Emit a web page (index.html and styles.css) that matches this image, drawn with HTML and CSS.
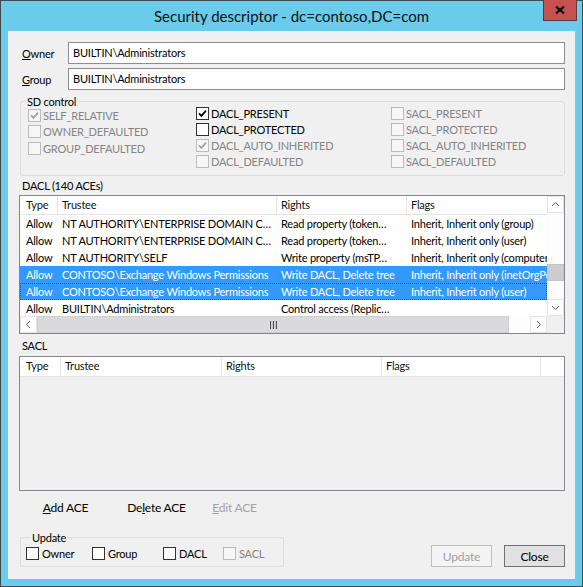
FILE: index.html
```html
<!DOCTYPE html>
<html>
<head>
<meta charset="utf-8">
<title>Security descriptor</title>
<link rel="stylesheet" href="styles.css">
</head>
<body>
<div class="window">
  <div class="titlebar">
    <div class="title">Security descriptor - dc=contoso,DC=com</div>
    <div class="close-btn">
      <svg class="close-x" viewBox="0 0 10 8" width="10" height="8"><path d="M1 0.6 L9 7.4 M9 0.6 L1 7.4"/></svg>
    </div>
  </div>
  <div class="client">
    <div class="field-row first">
      <div class="field-label"><u>O</u>wner</div>
      <div class="textbox">BUILTIN\Administrators</div>
    </div>
    <div class="field-row second">
      <div class="field-label"><u>G</u>roup</div>
      <div class="textbox">BUILTIN\Administrators</div>
    </div>

    <fieldset class="groupbox sd">
      <legend>SD control</legend>
      <div class="sd-grid">
        <div class="sd-col col1">
          <div class="cb disabled"><span class="box"><svg class="tick" viewBox="0 0 11 11"><path d="M2 5.4 L4.4 7.9 L9 2.6"/></svg></span><span>SELF_RELATIVE</span></div>
          <div class="cb disabled"><span class="box"></span><span>OWNER_DEFAULTED</span></div>
          <div class="cb disabled"><span class="box"></span><span>GROUP_DEFAULTED</span></div>
        </div>
        <div class="sd-col">
          <div class="cb"><span class="box"><svg class="tick" viewBox="0 0 11 11"><path d="M2 5.4 L4.4 7.9 L9 2.6"/></svg></span><span>DACL_PRESENT</span></div>
          <div class="cb"><span class="box"></span><span>DACL_PROTECTED</span></div>
          <div class="cb disabled"><span class="box"><svg class="tick" viewBox="0 0 11 11"><path d="M2 5.4 L4.4 7.9 L9 2.6"/></svg></span><span>DACL_AUTO_INHERITED</span></div>
          <div class="cb disabled"><span class="box"></span><span>DACL_DEFAULTED</span></div>
        </div>
        <div class="sd-col">
          <div class="cb disabled"><span class="box"></span><span>SACL_PRESENT</span></div>
          <div class="cb disabled"><span class="box"></span><span>SACL_PROTECTED</span></div>
          <div class="cb disabled"><span class="box"></span><span>SACL_AUTO_INHERITED</span></div>
          <div class="cb disabled"><span class="box"></span><span>SACL_DEFAULTED</span></div>
        </div>
      </div>
    </fieldset>

    <div class="section-label dacl-label">DACL (140 ACEs)</div>
    <div class="listview dacl">
      <div class="lv-top">
        <div class="lv-viewport">
          <div class="lv-header dacl-cols">
            <div class="hc">Type</div>
            <div class="hc">Trustee</div>
            <div class="hc">Rights</div>
            <div class="hc">Flags</div>
          </div>
          <div class="lv-row dacl-cols"><span>Allow</span><span>NT AUTHORITY\ENTERPRISE DOMAIN C…</span><span>Read property (token…</span><span>Inherit, Inherit only (group)</span></div>
          <div class="lv-row dacl-cols"><span>Allow</span><span>NT AUTHORITY\ENTERPRISE DOMAIN C…</span><span>Read property (token…</span><span>Inherit, Inherit only (user)</span></div>
          <div class="lv-row dacl-cols"><span>Allow</span><span>NT AUTHORITY\SELF</span><span>Write property (msTP…</span><span>Inherit, Inherit only (computer)</span></div>
          <div class="lv-row dacl-cols sel"><span>Allow</span><span>CONTOSO\Exchange Windows Permissions</span><span>Write DACL, Delete tree</span><span>Inherit, Inherit only (inetOrgPerson)</span></div>
          <div class="lv-row dacl-cols sel focus"><span>Allow</span><span>CONTOSO\Exchange Windows Permissions</span><span>Write DACL, Delete tree</span><span>Inherit, Inherit only (user)</span></div>
          <div class="lv-row dacl-cols"><span>Allow</span><span>BUILTIN\Administrators</span><span>Control access (Replic…</span><span></span></div>
        </div>
        <div class="vscroll">
          <div class="sb-btn"><svg viewBox="0 0 17 17" width="17" height="17"><path d="M5 10 L8.5 6.5 L12 10"/></svg></div>
          <div class="vtrack"><div class="vthumb"></div></div>
          <div class="sb-btn"><svg viewBox="0 0 17 17" width="17" height="17"><path d="M5 7 L8.5 10.5 L12 7"/></svg></div>
        </div>
      </div>
      <div class="lv-bottom">
        <div class="hscroll">
          <div class="sb-btn"><svg viewBox="0 0 17 17" width="17" height="17"><path d="M10 5 L6.5 8.5 L10 12"/></svg></div>
          <div class="hthumb"><svg class="grip" viewBox="0 0 7 8" width="7" height="8"><path d="M0.5 0 V8 M3.5 0 V8 M6.5 0 V8"/></svg></div>
          <div class="htrack"></div>
          <div class="sb-btn"><svg viewBox="0 0 17 17" width="17" height="17"><path d="M7 5 L10.5 8.5 L7 12"/></svg></div>
        </div>
        <div class="corner"></div>
      </div>
    </div>

    <div class="section-label sacl-label">SACL</div>
    <div class="listview sacl">
      <div class="lv-header sacl-cols">
        <div class="hc">Type</div>
        <div class="hc">Trustee</div>
        <div class="hc">Rights</div>
        <div class="hc">Flags</div>
        <div class="hc last"></div>
      </div>
    </div>

    <div class="ace-buttons">
      <div class="flat-btn add"><u>A</u>dd ACE</div>
      <div class="flat-btn del">De<u>l</u>ete ACE</div>
      <div class="flat-btn edit disabled-text"><u>E</u>dit ACE</div>
    </div>

    <div class="bottom-row">
      <fieldset class="groupbox update">
        <legend>Update</legend>
        <div class="update-row">
          <div class="cb u-owner"><span class="box"></span><span>Owner</span></div>
          <div class="cb u-group"><span class="box"></span><span>Group</span></div>
          <div class="cb u-dacl"><span class="box"></span><span>DACL</span></div>
          <div class="cb disabled u-sacl"><span class="box"></span><span>SACL</span></div>
        </div>
      </fieldset>
      <div class="push-btn disabled-btn">Update</div>
      <div class="push-btn close">Close</div>
    </div>
  </div>
</div>
</body>
</html>
```

FILE: styles.css
```css
* {
  box-sizing: border-box;
}

html, body {
  margin: 0;
  padding: 0;
}

body {
  width: 583px;
  height: 587px;
  overflow: hidden;
  font-family: Lato, "Liberation Sans", sans-serif;
  font-size: 11px;
  letter-spacing: -0.2px;
  color: #000;
  background: #68ccea;
}

.window {
  width: 583px;
  height: 587px;
  border: 1px solid #3d4a50;
  background: #68ccea;
  display: flex;
  flex-direction: column;
}

/* Title bar */
.titlebar {
  height: 30px;
  flex: none;
  display: grid;
  grid-template-columns: 1fr auto 1fr;
  align-items: start;
}

.title {
  grid-column: 2;
  font-size: 15px;
  letter-spacing: 0;
  line-height: 30px;
  color: #111;
  white-space: nowrap;
}

.close-btn {
  grid-column: 3;
  justify-self: end;
  margin-top: -1px;
  margin-right: 5px;
  width: 34px;
  height: 21px;
  background: #c75050;
  border: 1px solid #5e3a3a;
  border-top: none;
  display: flex;
  align-items: center;
  justify-content: center;
}

.close-x path {
  stroke: #111;
  stroke-width: 2.3;
  fill: none;
}

/* Client area */
.client {
  height: 548px;
  margin: 0 7px;
  background: #f0f0f0;
  padding: 0 10px 0 11px;
  display: flex;
  flex-direction: column;
}

.field-row {
  display: flex;
  align-items: center;
  height: 22px;
  flex: none;
}

.field-row.first {
  margin-top: 11px;
}

.field-row.second {
  margin-top: 4px;
}

.field-label {
  width: 49px;
  padding-left: 3px;
  flex: none;
}

.textbox {
  flex: 1;
  height: 22px;
  border: 1px solid #8a8d93;
  background: #fff;
  padding-left: 4px;
  line-height: 20px;
  white-space: nowrap;
}

/* Group boxes */
.groupbox {
  margin: 0;
  padding: 0;
  border: 1px solid #dcdcdc;
  border-radius: 3px;
  min-width: 0;
}

.groupbox legend {
  margin-left: 5px;
  padding: 0 1px;
  line-height: 13px;
  height: 13px;
}

.groupbox.sd {
  margin: 5px 0 0 1px;
  padding-bottom: 5px;
  flex: none;
}

.sd-grid {
  display: grid;
  grid-template-columns: 168px 195px 1fr;
  height: 64px;
  margin-top: -3px;
  margin-bottom: 1px;
  padding-left: 7px;
}

.sd-col {
  display: flex;
  flex-direction: column;
}

.sd-col.col1 {
  margin-top: 2px;
}

.sd-col.col1 .cb {
  height: 16.5px;
}

/* Checkboxes */
.cb {
  display: flex;
  align-items: center;
  height: 16px;
  flex: none;
  white-space: nowrap;
}

.box {
  width: 13px;
  height: 13px;
  flex: none;
  border: 1px solid #333;
  background: #fff;
  margin-right: 2px;
  display: flex;
}

.tick {
  width: 11px;
  height: 11px;
}

.tick path {
  fill: none;
  stroke: #000;
  stroke-width: 1.7;
}

.cb.disabled {
  color: #858585;
}

.cb.disabled .box {
  border-color: #bcbcbc;
  background: #f6f6f6;
}

.cb.disabled .tick path {
  stroke: #a3a3a3;
}

/* Section labels */
.section-label {
  line-height: 16px;
  height: 16px;
  padding-left: 3px;
  flex: none;
}

.dacl-label {
  margin-top: 2px;
}

.sacl-label {
  margin-top: 4px;
}

/* List views */
.listview {
  flex: none;
  border: 1px solid #828790;
  background: #fff;
  display: flex;
  flex-direction: column;
  overflow: hidden;
}

.listview.dacl {
  margin-top: 1px;
  height: 139px;
}

.listview.sacl {
  margin-top: 2px;
  height: 135px;
  background: #f0f0f0;
}

.lv-top {
  display: flex;
  height: 120px;
  flex: none;
}

.lv-viewport {
  width: 527px;
  overflow: hidden;
  flex: none;
}

.dacl-cols {
  display: grid;
  grid-template-columns: 38px 219px 130px 260px;
}

.sacl-cols {
  display: grid;
  grid-template-columns: 41px 161px 160px 159px 1fr;
}

.lv-header {
  background: #fff;
  border-bottom: 1px solid #e5e5e5;
}

.lv-header.dacl-cols {
  height: 19px;
}

.lv-header.sacl-cols {
  height: 20px;
}

.hc {
  border-right: 1px solid #e5e5e5;
  padding-left: 4px;
  line-height: 18px;
  white-space: nowrap;
  overflow: hidden;
  color: #111;
}

.hc:first-child {
  padding-left: 6px;
}

.sacl-cols .hc {
  line-height: 18px;
}

.sacl-cols .hc.last {
  border-right: none;
}

.lv-row {
  height: 17px;
  line-height: 17px;
}

.lv-row span {
  padding-left: 4px;
  white-space: nowrap;
  overflow: hidden;
}

.lv-row span:first-child {
  padding-left: 6px;
}

.lv-row.sel {
  background: #3399ff;
  color: #fff;
}

.lv-row.focus {
  outline: 1px dotted rgba(0, 40, 90, 0.55);
  outline-offset: -1px;
}

/* Scrollbars */
.vscroll {
  width: 17px;
  flex: none;
  display: flex;
  flex-direction: column;
  background: #fdfdfd;
}

.sb-btn {
  width: 17px;
  height: 17px;
  flex: none;
  background: #fdfdfd;
  border: 1px solid #e6e6e6;
}

.sb-btn svg {
  display: block;
  margin: -1px;
}

.sb-btn path {
  fill: none;
  stroke: #606060;
  stroke-width: 1;
}

.vtrack {
  flex: 1;
  display: flex;
  flex-direction: column;
}

.vthumb {
  margin-top: 51px;
  height: 17px;
  background: #cdcdcd;
  border: 1px solid #c4c4c4;
}

.lv-bottom {
  display: flex;
  height: 17px;
  flex: none;
}

.hscroll {
  width: 527px;
  display: flex;
  flex: none;
  background: #fdfdfd;
}

.hthumb {
  width: 472px;
  flex: none;
  background: #dadada;
  border: 1px solid #cfcfcf;
  display: flex;
  align-items: center;
  justify-content: center;
}

.grip path {
  stroke: #555;
  stroke-width: 1.2;
}

.htrack {
  flex: 1;
}

.corner {
  width: 17px;
  flex: none;
  background: #f0f0f0;
}

/* ACE buttons */
.ace-buttons {
  display: flex;
  height: 23px;
  margin-top: 5px;
  margin-bottom: 1px;
  flex: none;
  font-size: 12px;
}

.flat-btn {
  width: 75px;
  text-align: center;
  line-height: 23px;
  white-space: nowrap;
}

.flat-btn.add {
  margin-left: 9px;
}

.flat-btn.del {
  margin-left: 16px;
}

.flat-btn.edit {
  margin-left: 3px;
}

.disabled-text {
  color: #a2a2a2;
}

/* Bottom row */
.bottom-row {
  display: flex;
  align-items: flex-end;
  margin-top: 11px;
  flex: none;
}

.groupbox.update {
  width: 264px;
  margin-left: 1px;
  padding: 0 0 5px 5px;
}

.update-row {
  display: flex;
  margin-top: 1px;
}

.update-row .box {
  margin-right: 3px;
}

.u-owner {
  width: 66px;
}

.u-group {
  width: 71px;
}

.u-dacl {
  width: 60px;
}

.push-btn {
  width: 61px;
  height: 22px;
  line-height: 21px;
  text-align: center;
  border: 1px solid #707070;
  background: #e1e1e1;
  flex: none;
  font-size: 12px;
}

.push-btn.disabled-btn {
  margin-left: auto;
  border-color: #bfbfbf;
  background: #f4f4f4;
  color: #a0a0a0;
}

.push-btn.close {
  margin-left: 12px;
}
```
